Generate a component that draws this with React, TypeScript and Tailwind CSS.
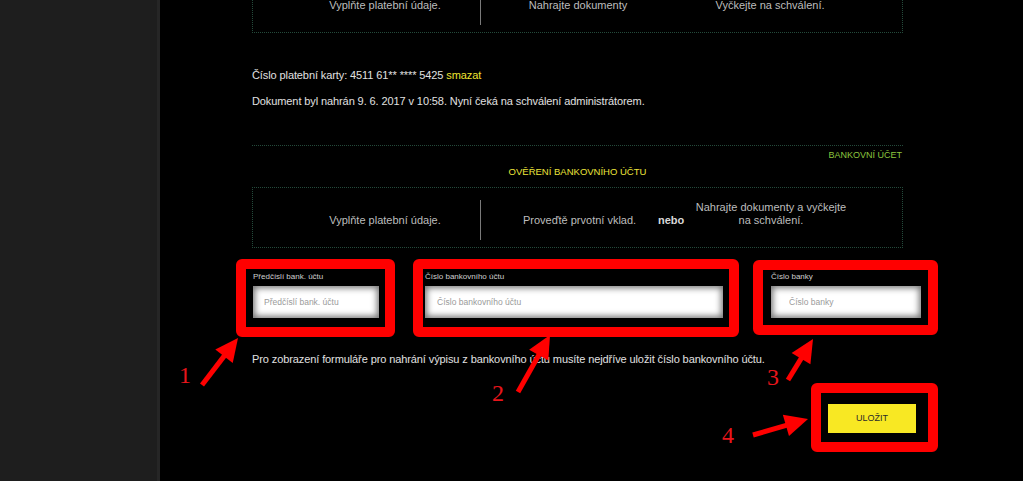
import React from 'react';

type Pt = [number, number];

// red annotation arrow: shaft + triangular head
const Arrow = ({ from, to }: { from: Pt; to: Pt }) => {
    const dx = to[0] - from[0];
    const dy = to[1] - from[1];
    const len = Math.hypot(dx, dy);
    const ux = dx / len;
    const uy = dy / len;
    const head = 23;
    const half = 11;
    const bx = to[0] - ux * head;
    const by = to[1] - uy * head;
    const px = -uy;
    const py = ux;
    return (
        <g>
            <line x1={from[0]} y1={from[1]} x2={bx + ux * 3} y2={by + uy * 3} stroke="#ff0000" strokeWidth={5} />
            <polygon
                points={`${to[0]},${to[1]} ${bx + px * half},${by + py * half} ${bx - px * half},${by - py * half}`}
                fill="#ff0000"
            />
        </g>
    );
};

const inputCls =
    'block h-[32px] bg-white text-[8.5px] text-[#555] placeholder:text-[#9a9a9a] outline-none shadow-[inset_0_0_6px_2px_rgba(0,0,0,0.55)]';

export default function App() {
    return (
        <div className="relative flex h-[481px] w-[1023px] overflow-hidden bg-black font-['Liberation_Sans',Arial,sans-serif]">
            <aside className="w-[160px] shrink-0 border-r-[3px] border-[#262626] bg-[#1e1e1e]" />

            <main className="flex-1 pl-[92px]">
                <div className="w-[651px]">
                    {/* card steps */}
                    <div className="-mt-[28px] flex items-end border border-dotted border-[#244a3b] pt-[12px] pb-[7px] pl-[37px] text-[11px] leading-[13px] text-[#bdbdbd]">
                        <div className="w-[190px] pb-[13px] text-center">Vyplňte platební údaje.</div>
                        <div className="h-[40px] w-px bg-[#7a7a7a]" />
                        <div className="w-[194px] pb-[13px] text-center">Nahrajte dokumenty</div>
                        <div className="w-[190px] pb-[13px] text-center">Vyčkejte na schválení.</div>
                    </div>

                    <p className="mt-[36px] text-[11px] leading-[13px] tracking-[-0.1px] text-[#e0e0e0]">
                        Číslo platební karty: 4511 61** **** 5425 <span className="text-[#f0e431]">smazat</span>
                    </p>
                    <p className="mt-[13px] text-[11px] leading-[13px] tracking-[-0.1px] text-[#e0e0e0]">
                        Dokument byl nahrán 9. 6. 2017 v 10:58. Nyní čeká na schválení administrátorem.
                    </p>

                    <section className="mt-[37px] border-t border-dotted border-[#244a3b] pt-[4px]">
                        <div className="pr-px text-right text-[9px] leading-[11px] text-[#8cc63e]">BANKOVNÍ ÚČET</div>
                        <div className="mt-[5px] text-center text-[9.5px] leading-[12px] text-[#ece43a]">
                            OVĚŘENÍ BANKOVNÍHO ÚČTU
                        </div>

                        <div className="mt-[9px] flex items-end border border-dotted border-[#244a3b] pt-[12px] pb-[7px] pl-[37px] text-[11px] leading-[13px] text-[#bdbdbd]">
                            <div className="w-[190px] pb-[13px] text-center">Vyplňte platební údaje.</div>
                            <div className="h-[40px] w-px bg-[#7a7a7a]" />
                            <div className="w-[177px] pb-[13px] pl-[42px]">Proveďtě prvotní vklad.</div>
                            <div className="w-[30px] pb-[13px] font-bold text-[#d8d8d8]">nebo</div>
                            <div className="w-[166px] pb-[13px] text-center">
                                Nahrajte dokumenty a vyčkejte
                                <br />
                                na schválení.
                            </div>
                        </div>
                    </section>

                    {/* bank account fields */}
                    <div className="-ml-[16px] mt-[11px] flex items-start">
                        <div className="h-[78px] w-[159px] shrink-0 rounded-md border-[10px] border-[#ff0000] pt-[3px] pl-[7px]">
                            <label className="block text-[8px] leading-[10px] text-[#cfcfcf]">Předčíslí bank. účtu</label>
                            <input className={`${inputCls} mt-[4px] w-[126px] pl-[11px]`} placeholder="Předčíslí bank. účtu" />
                        </div>
                        <div className="ml-[18px] h-[78px] w-[326px] shrink-0 rounded-md border-[10px] border-[#ff0000] pt-[3px] pl-[2px]">
                            <label className="block text-[8px] leading-[10px] text-[#cfcfcf]">Číslo bankovního účtu</label>
                            <input className={`${inputCls} mt-[4px] w-[298px] pl-[12px]`} placeholder="Číslo bankovního účtu" />
                        </div>
                        <div className="mt-px ml-[14px] h-[75px] w-[185px] shrink-0 rounded-md border-[10px] border-[#ff0000] pt-[2px] pl-[8px]">
                            <label className="block text-[8px] leading-[10px] text-[#cfcfcf]">Číslo banky</label>
                            <input className={`${inputCls} mt-[4px] w-[150px] pl-[18px]`} placeholder="Číslo banky" />
                        </div>
                    </div>

                    <p className="mt-[16px] text-[11px] leading-[13px] tracking-[-0.1px] text-[#e0e0e0]">
                        Pro zobrazení formuláře pro nahrání výpisu z bankovního účtu musíte nejdříve uložit číslo bankovního účtu.
                    </p>

                    <div className="ml-[559px] mt-[17px] h-[69px] w-[127px] rounded-md border-[10px] border-[#ff0000] pt-[11px] pl-[7px]">
                        <button className="h-[29px] w-[88px] bg-[#f8e823] text-[9px] text-[#2a2a2a]">ULOŽIT</button>
                    </div>
                </div>
            </main>

            {/* annotations */}
            <svg className="pointer-events-none absolute left-0 top-0" width={1023} height={481}>
                <Arrow from={[202, 385]} to={[238, 338]} />
                <Arrow from={[518, 392]} to={[550, 335]} />
                <Arrow from={[788, 380]} to={[813, 339]} />
                <Arrow from={[753, 435]} to={[808, 419]} />
            </svg>
            <span className="absolute left-[179px] top-[363px] font-['Liberation_Serif',serif] text-[24px] leading-none text-[#e8151b]">1</span>
            <span className="absolute left-[492px] top-[381px] font-['Liberation_Serif',serif] text-[24px] leading-none text-[#e8151b]">2</span>
            <span className="absolute left-[767px] top-[365px] font-['Liberation_Serif',serif] text-[24px] leading-none text-[#e8151b]">3</span>
            <span className="absolute left-[722px] top-[423px] font-['Liberation_Serif',serif] text-[24px] leading-none text-[#e8151b]">4</span>
        </div>
    );
}
